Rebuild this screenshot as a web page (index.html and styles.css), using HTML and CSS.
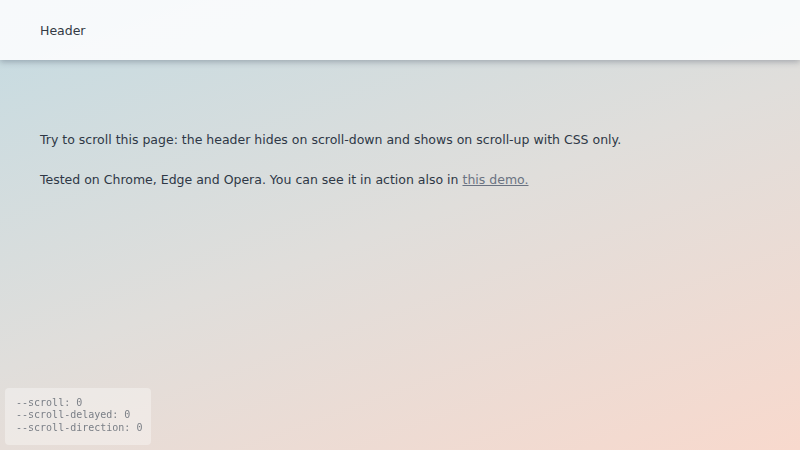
FILE: index.html
```html
<!DOCTYPE html>
<html lang="en">
<head>
<meta charset="utf-8">
<title>Scroll header</title>
<link rel="stylesheet" href="styles.css">
</head>
<body>
<header class="site-header">Header</header>
<main class="content">
  <p>Try to scroll this page: the header hides on scroll-down and shows on scroll-up with CSS only.</p>
  <p>Tested on Chrome, Edge and Opera. You can see it in action also in <a href="#">this demo.</a></p>
</main>
<pre class="debug">--scroll: 0
--scroll-delayed: 0
--scroll-direction: 0</pre>
</body>
</html>
```
FILE: styles.css
```css
html, body {
  margin: 0;
  height: 100%;
}
body {
  font-family: "DejaVu Sans", sans-serif;
  font-size: 12.5px;
  color: #2e3846;
  background: linear-gradient(160deg, #c4dbe2 0%, #e0dedb 50%, #f8d9cd 100%);
  overflow: hidden;
}
.site-header {
  height: 60px;
  display: flex;
  align-items: center;
  padding: 0 40px;
  background: rgba(250, 251, 252, 0.95);
  box-shadow: 0 2px 6px rgba(60, 70, 90, 0.35);
  color: #333a44;
}
.content {
  padding: 70px 40px;
}
.content p {
  margin: 0 0 20px;
  line-height: 20px;
}
.content a {
  color: #6a7382;
}
.debug {
  position: fixed;
  left: 5px;
  bottom: 5px;
  margin: 0;
  padding: 9px 10px 11px 11px;
  width: 125px;
  background: rgba(255, 255, 255, 0.35);
  border-radius: 4px;
  font-family: "DejaVu Sans Mono", monospace;
  font-size: 10px;
  line-height: 12.5px;
  color: #7a7f86;
}
```
